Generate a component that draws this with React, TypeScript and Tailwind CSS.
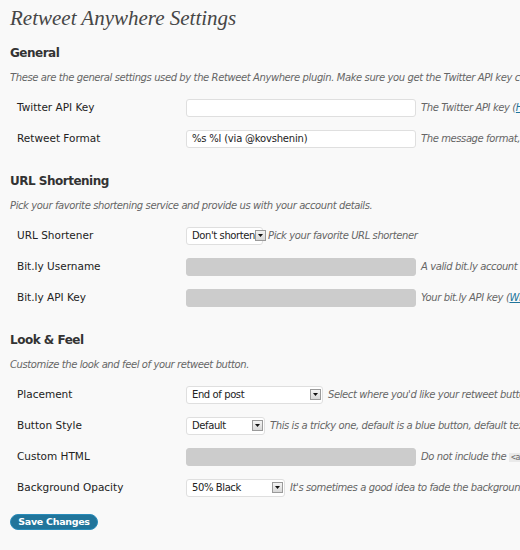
import React from "react";

const sans = "font-['DejaVu_Sans',Verdana,sans-serif]";

function Arrow() {
  return (
    <span className="flex h-[11px] w-[11px] shrink-0 items-center justify-center border border-[#9a9a9a] bg-gradient-to-b from-[#f4f4f4] to-[#d8d8d8]">
      <svg width="5" height="3" viewBox="0 0 5 3">
        <path d="M0 0h5L2.5 3z" fill="#111" />
      </svg>
    </span>
  );
}

function Select({ value, width }: { value: string; width: string }) {
  return (
    <div className={`flex h-[18px] ${width} shrink-0 items-center justify-between rounded-[3px] border border-[#dfdfdf] bg-white pl-[5px] pr-[1px] text-[10px] tracking-[-0.4px] text-[#222]`}>
      <span className="whitespace-nowrap">{value}</span>
      <Arrow />
    </div>
  );
}

function Input({ value, disabled }: { value?: string; disabled?: boolean }) {
  return (
    <div
      className={`flex h-[18px] w-[230px] shrink-0 items-center rounded-[3px] border px-[5px] text-[10px] tracking-[-0.2px] text-[#222] ${
        disabled ? "border-[#cccccc] bg-[#cccccc]" : "border-[#dfdfdf] bg-white"
      }`}
    >
      {value}
    </div>
  );
}

function Row({ label, control, note }: { label: string; control: React.ReactNode; note: React.ReactNode }) {
  return (
    <div className="flex h-[31px] items-center whitespace-nowrap">
      <div className="w-[176px] shrink-0 pl-[7px] text-[10.5px] text-[#222]">{label}</div>
      {control}
      <div className="ml-[5px] text-[10px] italic tracking-[-0.4px] text-[#666]">{note}</div>
    </div>
  );
}

function Section({ title, desc, children }: { title: string; desc: string; children: React.ReactNode }) {
  return (
    <div>
      <h3 className="flex h-[24px] items-center text-[12px] font-bold tracking-[-0.5px] text-[#333]">{title}</h3>
      <p className="mb-[3px] flex h-[24px] items-center whitespace-nowrap text-[10px] italic tracking-[-0.4px] text-[#666]">{desc}</p>
      {children}
    </div>
  );
}

const link = "text-[#21759b] underline";

export default function App() {
  return (
    <div className={`h-[550px] w-[520px] overflow-hidden bg-[#f9f9f9] px-[10px] ${sans}`}>
      <h2 className="h-[41px] pt-[5px] font-['Liberation_Serif',Georgia,serif] text-[21px] italic leading-[26px] text-[#464646]">
        Retweet Anywhere Settings
      </h2>

      <Section title="General" desc="These are the general settings used by the Retweet Anywhere plugin. Make sure you get the Twitter API key correct.">
        <Row
          label="Twitter API Key"
          control={<Input />}
          note={
            <>
              The Twitter API key (<span className={link}>Help</span>)
            </>
          }
        />
        <Row label="Retweet Format" control={<Input value="%s %l (via @kovshenin)" />} note="The message format, %s is the title, %l is the link" />
      </Section>

      <div className="h-[15px]" />

      <Section title="URL Shortening" desc="Pick your favorite shortening service and provide us with your account details.">
        <Row label="URL Shortener" control={<Select value="Don't shorten" width="w-[77px]" />} note="Pick your favorite URL shortener" />
        <Row label="Bit.ly Username" control={<Input disabled />} note="A valid bit.ly account username" />
        <Row
          label="Bit.ly API Key"
          control={<Input disabled />}
          note={
            <>
              Your bit.ly API key (<span className={link}>Where do I get it?</span>)
            </>
          }
        />
      </Section>

      <div className="h-[15px]" />

      <Section title="Look & Feel" desc="Customize the look and feel of your retweet button.">
        <Row label="Placement" control={<Select value="End of post" width="w-[137px]" />} note="Select where you'd like your retweet button to appear" />
        <Row label="Button Style" control={<Select value="Default" width="w-[79px]" />} note="This is a tricky one, default is a blue button, default text" />
        <Row
          label="Custom HTML"
          control={<Input disabled />}
          note={
            <>
              Do not include the{" "}
              <code className="bg-[#eaeaea] px-[2px] font-['DejaVu_Sans_Mono',monospace] text-[8px] not-italic">&lt;a&gt;</code> tag
            </>
          }
        />
        <Row label="Background Opacity" control={<Select value="50% Black" width="w-[99px]" />} note="It's sometimes a good idea to fade the background" />
      </Section>

      <div className="pt-[11px]">
        <button className="flex h-[16px] w-[88px] items-center justify-center rounded-full border border-[#298cba] bg-[#21759b] text-[9.5px] font-bold tracking-[-0.3px] text-white">
          Save Changes
        </button>
      </div>
    </div>
  );
}
